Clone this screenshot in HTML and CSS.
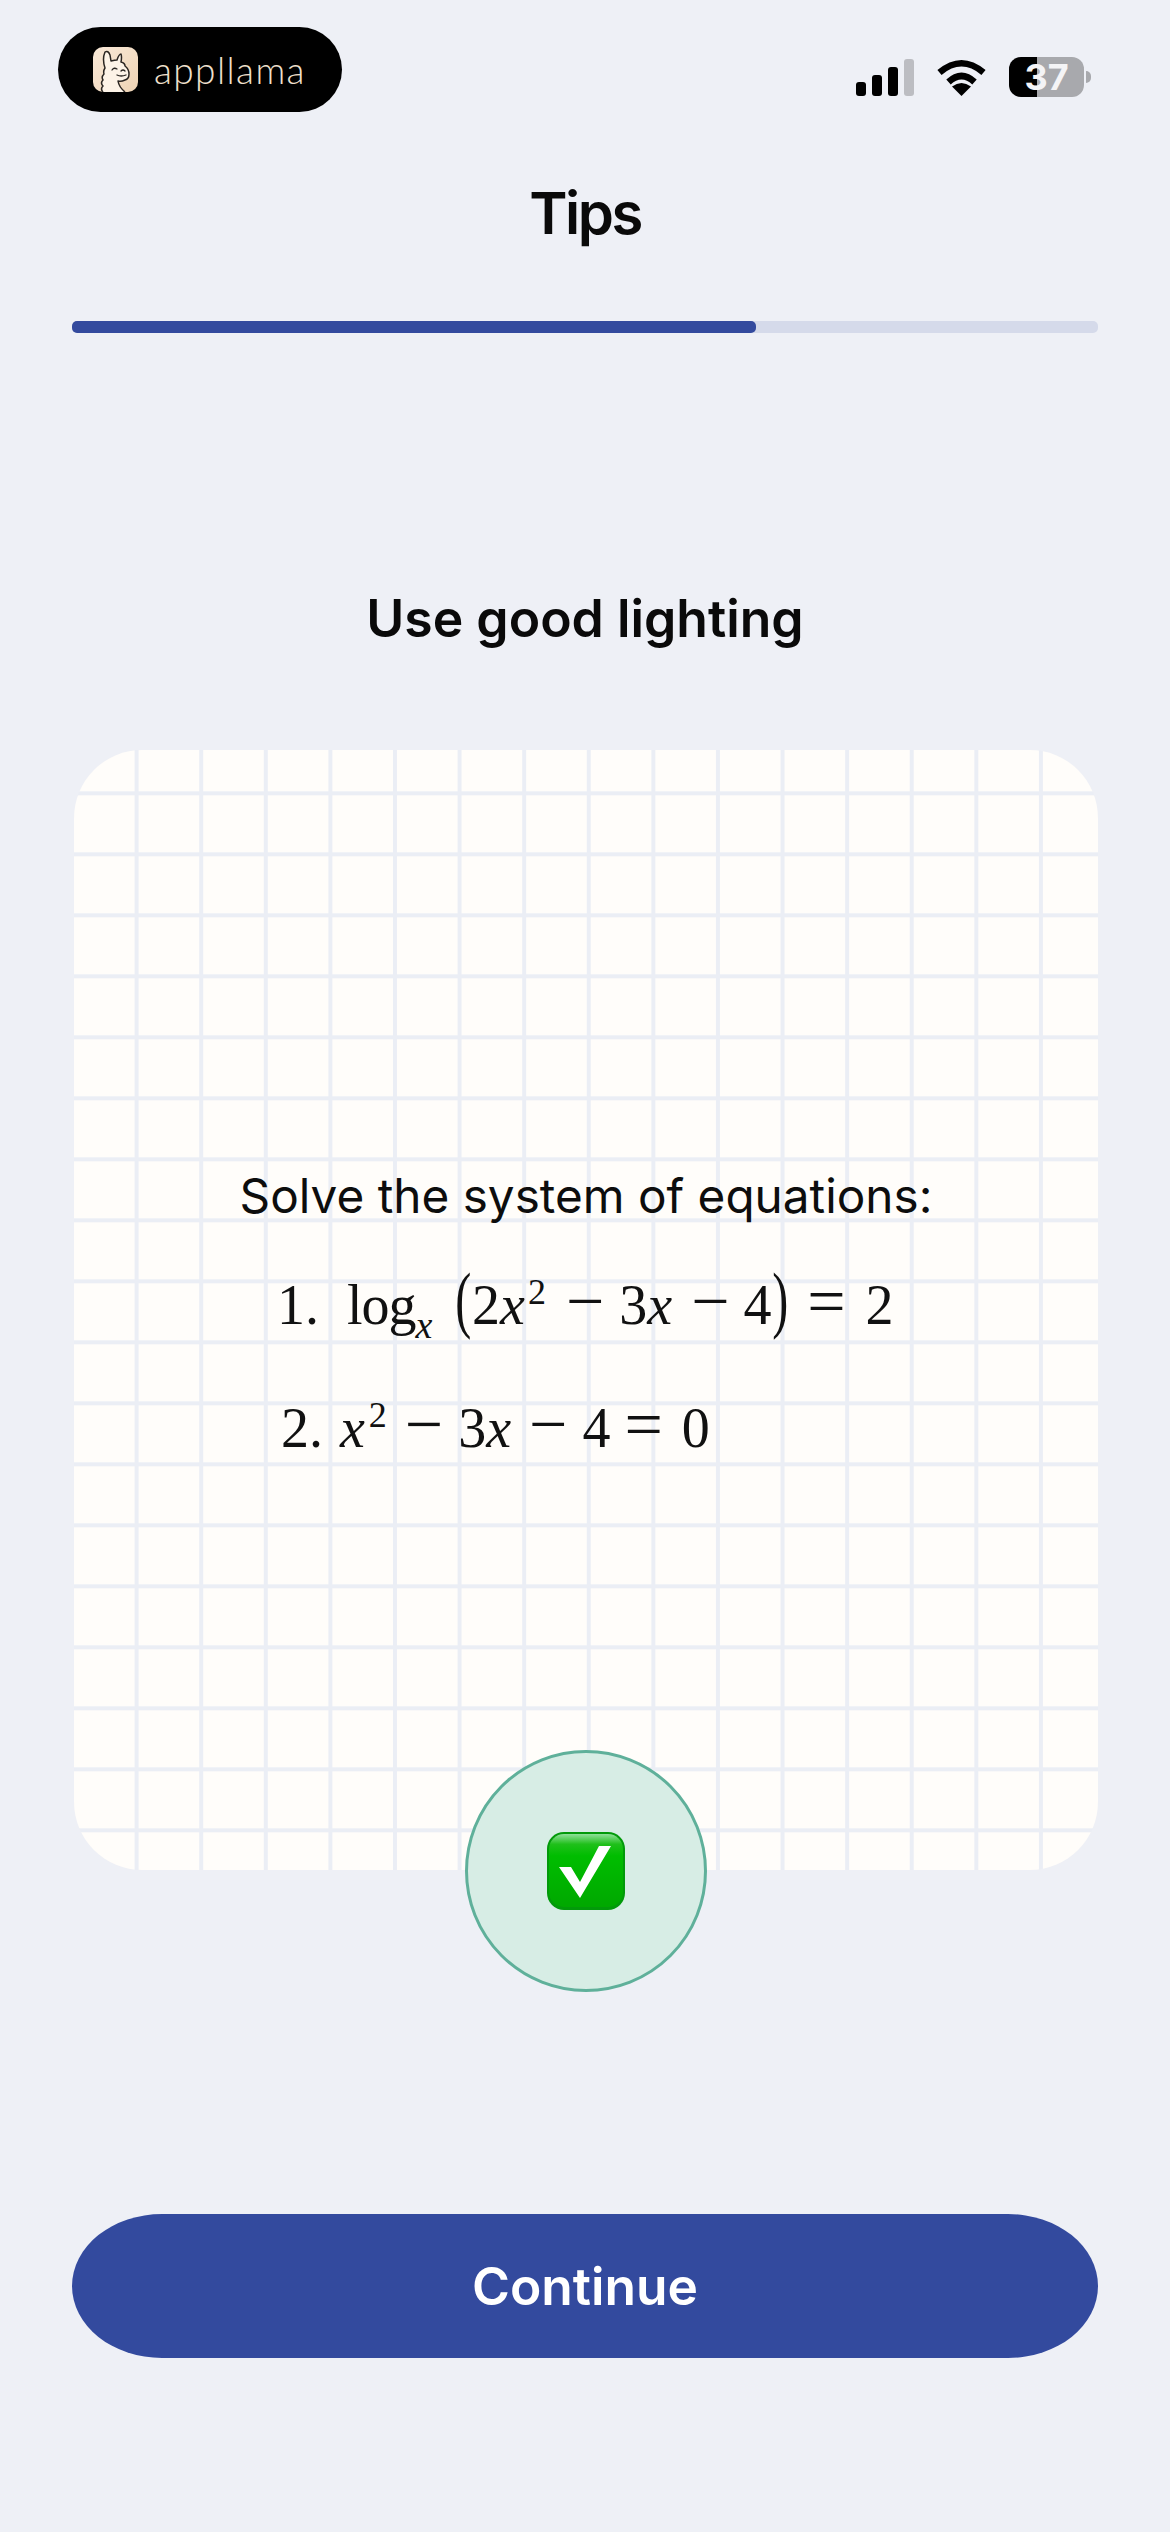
FILE: index.html
```html
<!DOCTYPE html>
<html lang="en">
<head>
<meta charset="utf-8">
<title>Tips</title>
<link rel="stylesheet" href="styles.css">
</head>
<body>
<main class="screen">
  <header class="status">
    <div class="brand">
      <svg class="brand-icon" viewBox="0 0 45 45" aria-hidden="true">
        <defs>
          <linearGradient id="tile" x1="0" y1="0" x2="1" y2="1">
            <stop offset="0" stop-color="#f9e9d8"/>
            <stop offset="1" stop-color="#eed3b4"/>
          </linearGradient>
        </defs>
        <rect width="45" height="45" rx="10" fill="url(#tile)"/>
        <path d="M10 45 Q7 42 10 39 Q7 36 10 33 Q8 30 11 27 Q10 24 12 21 Q9 12 12 5 Q15 3 17 8 L18 14 Q22 13 24 13 Q26 7 28 7 Q29 10 28 15 Q32 16 32 19 Q36 22 36 27 Q36 32 32 33 Q28 35 25 34 Q26 40 32 45" fill="#fdf3e7" stroke="#2b2622" stroke-width="1.5" stroke-linejoin="round"/>
        <path d="M19 23 Q21 20 24 22 M28 24 Q30 22 32 24 M24 28 Q28 30 33 28" fill="none" stroke="#2b2622" stroke-width="1.3" stroke-linecap="round"/>
      </svg>
      <span class="brand-name">appllama</span>
    </div>
    <div class="indicators">
      <div class="signal">
        <i class="bar bar-1"></i><i class="bar bar-2"></i><i class="bar bar-3"></i><i class="bar bar-4"></i>
      </div>
      <svg class="wifi" viewBox="0 0 51 37" aria-hidden="true">
        <path d="M3.5 13.5 Q25.5 -5 47.5 13.5" fill="none" stroke="#000" stroke-width="6.5" stroke-linecap="butt"/>
        <path d="M12.5 23 Q25.5 11 38.5 23" fill="none" stroke="#000" stroke-width="6.5"/>
        <path d="M25.5 37 L16 27.5 Q25.5 20.5 35 27.5 Z" fill="#000"/>
      </svg>
      <div class="battery">
        <div class="battery-body"><span class="battery-level">37</span></div>
        <i class="battery-nub"></i>
      </div>
    </div>
  </header>

  <h1 class="title">Tips</h1>
  <div class="progress"><div class="progress-fill"></div></div>
  <h2 class="heading">Use good lighting</h2>

  <section class="card">
    <p class="prompt">Solve the system of equations:</p>
    <div class="math"><span>1.</span><span class="log g28">log</span><sub class="sub">x</sub><span class="paren g19">(</span><span class="gn4">2</span><i>x</i><sup class="sup g3">2</sup><span class="op g20">−</span><span class="g15">3</span><i>x</i><span class="op g19">−</span><span class="g14">4</span><span class="paren gn4">)</span><span class="op g15">=</span><span class="g20">2</span></div>
    <div class="math"><span class="g4">2.</span><i class="g17">x</i><sup class="sup g4">2</sup><span class="op g18">−</span><span class="g15">3</span><i>x</i><span class="op g18">−</span><span class="g15">4</span><span class="op g14">=</span><span class="g19">0</span></div>
    <div class="badge">
      <svg class="check" viewBox="0 0 78 78" aria-hidden="true">
        <defs>
          <linearGradient id="green" x1="0" y1="0" x2="0" y2="1">
            <stop offset="0" stop-color="#8fe09a"/>
            <stop offset=".14" stop-color="#1fc01a"/>
            <stop offset=".3" stop-color="#00bd00"/>
            <stop offset="1" stop-color="#00a800"/>
          </linearGradient>
        </defs>
        <rect width="78" height="78" rx="17" fill="#029a0a"/>
        <rect x="2" y="2" width="74" height="73" rx="15" fill="url(#green)"/>
        <path d="M12 35 L24 35 L33 50 L52 14 L64 14 L33 66 Z" fill="#fff"/>
      </svg>
    </div>
  </section>

  <button class="continue" type="button">Continue</button>
</main>
</body>
</html>
```
FILE: styles.css
```css
* { box-sizing: border-box; }

html, body {
  margin: 0;
  background: #eef0f6;
}

.screen {
  width: 1170px;
  height: 2532px;
  overflow: hidden;
  display: flex;
  flex-direction: column;
  padding: 27px 72px 0;
  font-family: Inter, "Liberation Sans", sans-serif;
  color: #0a0a0a;
}

.status {
  display: flex;
  justify-content: space-between;
  align-items: flex-start;
  margin: 0 7px 0 -14px;
}

.brand {
  width: 284px;
  height: 85px;
  border-radius: 43px;
  background: #000;
  display: flex;
  align-items: center;
  padding-left: 35px;
  gap: 16px;
}

.brand-icon { width: 45px; height: 45px; flex: none; }

.brand-name {
  font-family: Lato, sans-serif;
  font-weight: 300;
  font-size: 37px;
  line-height: 44px;
  color: #f0e0cd;
  letter-spacing: 1.4px;
}

.indicators {
  display: flex;
  align-items: flex-start;
  padding-top: 30px;
}

.signal {
  display: flex;
  align-items: flex-end;
  gap: 6px;
  height: 39px;
  padding-top: 2px;
}

.bar { display: block; width: 10px; border-radius: 3px; background: #000; }
.bar-1 { height: 14px; }
.bar-2 { height: 21px; }
.bar-3 { height: 29px; }
.bar-4 { height: 37px; background: #bcbdc2; }

.wifi { width: 51px; height: 37px; margin: 2px 22px 0; display: block; }

.battery { display: flex; align-items: center; height: 40px; }

.battery-body {
  width: 75px;
  height: 40px;
  border-radius: 12px;
  background: linear-gradient(90deg, #000 28px, #a8a9ad 28px);
  display: flex;
  align-items: center;
  justify-content: center;
}

.battery-level {
  font-size: 36px;
  line-height: 40px;
  font-weight: 700;
  color: #f4f4f6;
}

.battery-nub {
  display: block;
  width: 5px;
  height: 12px;
  margin-left: 2px;
  border-radius: 0 6px 6px 0;
  background: #a8a9ad;
}

.title {
  margin: 66px 0 0;
  font-size: 58px;
  line-height: 70px;
  font-weight: 600;
  text-align: center;
  letter-spacing: -2.5px;
}

.progress {
  margin-top: 73px;
  height: 12px;
  border-radius: 5px;
  background: #d5daea;
  flex: none;
}

.progress-fill {
  width: 684px;
  height: 100%;
  border-radius: 5px;
  background: #334a9e;
}

.heading {
  margin: 255px 0 0;
  font-size: 51.7px;
  line-height: 60px;
  font-weight: 600;
  text-align: center;
}

.card {
  position: relative;
  margin: 102px 0 0 2px;
  height: 1120px;
  flex: none;
  padding-top: 418px;
  border-radius: 68px;
  background-color: #fffdfa;
  background-image:
    linear-gradient(90deg, transparent 60.2px, #ebeef5 60.2px),
    linear-gradient(180deg, transparent 56.6px, #ebeef5 56.6px);
  background-size: 64.6px 61px;
  background-position: 0 -15.7px;
}

.prompt {
  margin: 0 0 21px;
  font-size: 47.7px;
  line-height: 56px;
  text-align: center;
  color: #0d0d0d;
}

.math {
  padding-left: 203px;
  height: 123px;
  line-height: 121px;
  font-family: "Liberation Serif", serif;
  font-size: 56px;
  white-space: nowrap;
  color: #111;
}

.math i { font-style: italic; }

.log { letter-spacing: -1px; }

.sub, .sup {
  font-size: 36px;
  line-height: 0;
}

.sub { vertical-align: -14px; font-style: italic; font-size: 38px; }
.sup { vertical-align: 20px; }

.paren {
  display: inline-block;
  font-size: 74px;
  line-height: 0;
  transform: scaleX(.65);
}

.op { font-size: 68px; line-height: 0; }

.g3 { margin-left: 3px; }
.g4 { margin-left: 4px; }
.gn4 { margin-left: -4px; }
.g14 { margin-left: 14px; }
.g15 { margin-left: 15px; }
.g17 { margin-left: 17px; }
.g18 { margin-left: 18px; }
.g19 { margin-left: 19px; }
.g20 { margin-left: 20px; }
.g28 { margin-left: 28px; }

.badge {
  position: absolute;
  left: 391px;
  bottom: -122px;
  width: 242px;
  height: 242px;
  border-radius: 50%;
  background: #d7ede5;
  border: 3px solid #5fb09a;
  display: flex;
  align-items: center;
  justify-content: center;
}

.check { width: 78px; height: 78px; display: block; }

.continue {
  margin-top: 344px;
  height: 144px;
  flex: none;
  border: 0;
  border-radius: 90px / 72px;
  background: #334a9e;
  color: #fff;
  font-family: inherit;
  font-size: 51.5px;
  font-weight: 600;
}
```
